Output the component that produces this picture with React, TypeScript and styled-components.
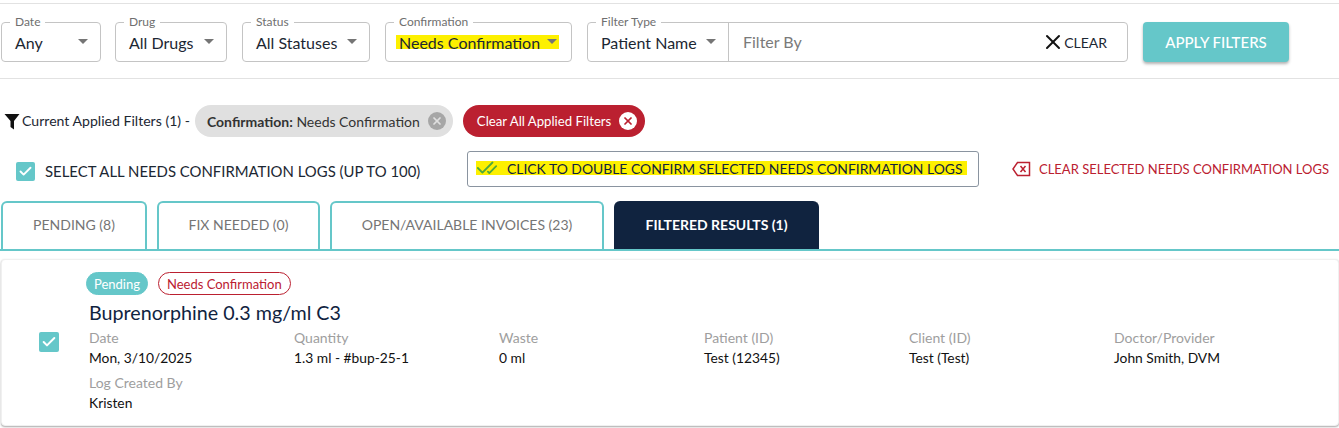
import React from "react";
import styled, { createGlobalStyle } from "styled-components";
import { X, Check, CheckCheck } from "lucide-react";

const GlobalStyle = createGlobalStyle`
  html, body {
    margin: 0;
    padding: 0;
    background: #fff;
    font-family: Lato, "Open Sans", sans-serif;
    color: #10233f;
  }
`;

const Page = styled.div`
  width: 1339px;
  height: 428px;
  overflow: hidden;
  padding-top: 3px;
  box-sizing: border-box;
`;

const FilterBar = styled.div`
  display: flex;
  align-items: flex-start;
  height: 76px;
  padding: 18px 0 0 1px;
  box-sizing: border-box;
  border-top: 1px solid #e2e2e2;
  border-bottom: 1px solid #e2e2e2;
`;

const Field = styled.div<{ $width: number; $gap?: number }>`
  position: relative;
  width: ${(p) => p.$width}px;
  height: 40px;
  margin-right: ${(p) => p.$gap ?? 15}px;
  box-sizing: border-box;
  border: 1px solid #c4c4c4;
  border-radius: 4px;
  display: flex;
  align-items: center;
  flex-shrink: 0;
`;

const Legend = styled.span`
  position: absolute;
  top: -8px;
  left: 8px;
  padding: 0 5px;
  background: #fff;
  font-size: 12px;
  line-height: 14px;
  color: #6f6f6f;
`;

const SelectValue = styled.div<{ $highlight?: boolean }>`
  display: flex;
  align-items: center;
  justify-content: space-between;
  flex: 1;
  height: 14px;
  margin: 0 12px 0 ${(p) => (p.$highlight ? 10 : 13)}px;
  padding: ${(p) => (p.$highlight ? "0 2px 0 3px" : "0")};
  background: ${(p) => (p.$highlight ? "#fdf000" : "transparent")};
  font-size: 16px;
  white-space: nowrap;
  color: #1c2733;
`;

const Caret = styled.span`
  width: 0;
  height: 0;
  margin-top: -2px;
  border-left: 5px solid transparent;
  border-right: 5px solid transparent;
  border-top: 5px solid #757575;
`;

const TypePart = styled.div`
  position: relative;
  display: flex;
  align-items: center;
  width: 140px;
  height: 100%;
  border-right: 1px solid #c4c4c4;
`;

const FilterInput = styled.div`
  flex: 1;
  padding: 0 0 2px 14px;
  font-size: 16px;
  color: #7a7a7a;
`;

const ClearButton = styled.div`
  display: flex;
  align-items: center;
  margin-right: 20px;
  font-size: 14px;
  color: #1c2733;
`;

const ClearIcon = styled(X)`
  margin-right: -1px;
`;

const ApplyButton = styled.div`
  width: 146px;
  height: 40px;
  border-radius: 4px;
  background: #65c7c9;
  color: #fff;
  font-size: 15px;
  font-weight: 500;
  display: flex;
  align-items: center;
  justify-content: center;
  box-shadow: 0 2px 3px rgba(0, 0, 0, 0.3);
`;

const AppliedRow = styled.div`
  display: flex;
  align-items: center;
  height: 32px;
  margin-top: 26px;
  padding-left: 4px;
  color: #1c2733;
`;

const AppliedLabel = styled.span`
  margin-left: 2px;
  margin-right: 5px;
  margin-bottom: 1px;
  font-size: 14.1px;
`;

const Chip = styled.div<{ $danger?: boolean }>`
  display: flex;
  align-items: center;
  justify-content: space-between;
  height: 32px;
  box-sizing: border-box;
  padding: 0 ${(p) => (p.$danger ? 8 : 7)}px 0 ${(p) => (p.$danger ? 14 : 12)}px;
  margin-right: ${(p) => (p.$danger ? 0 : 10)}px;
  border-radius: 16px;
  background: ${(p) => (p.$danger ? "#bb2030" : "#e0e0e0")};
  color: ${(p) => (p.$danger ? "#fff" : "#333")};
  font-size: ${(p) => (p.$danger ? 13.2 : 14)}px;
  white-space: nowrap;
  gap: 8px;
`;

const ChipClose = styled.span<{ $danger?: boolean }>`
  display: flex;
  align-items: center;
  justify-content: center;
  width: 18px;
  height: 18px;
  border-radius: 50%;
  background: ${(p) => (p.$danger ? "#fff" : "#a6a6a6")};
  color: ${(p) => (p.$danger ? "#bb2030" : "#e0e0e0")};
`;

const SelectionRow = styled.div`
  display: flex;
  align-items: center;
  height: 36px;
  margin-top: 14px;
  padding-left: 16px;
`;

const CheckBox = styled.span`
  display: flex;
  align-items: center;
  justify-content: center;
  flex-shrink: 0;
  width: 19px;
  height: 19px;
  border-radius: 2px;
  background: #65c7c9;
  color: #fff;
`;

const SelectAllCheck = styled(CheckBox)`
  margin-top: 4px;
`;

const SelectAllLabel = styled.span`
  flex-shrink: 0;
  width: 422px;
  margin-left: 10px;
  margin-top: 4px;
  font-size: 14.9px;
  white-space: nowrap;
  color: #1c2733;
`;

const ConfirmButton = styled.div`
  display: flex;
  align-items: center;
  flex-shrink: 0;
  width: 512px;
  height: 36px;
  box-sizing: border-box;
  padding: 0 0 2px 8px;
  border: 1px solid #8a94a0;
  border-radius: 3px;
  font-size: 13.9px;
`;

const Highlight = styled.span`
  display: flex;
  align-items: center;
  gap: 9px;
  height: 14px;
  padding-right: 4px;
  background: #fdf000;
  color: #10233f;
  white-space: nowrap;
`;

const ClearSelected = styled.div`
  display: flex;
  align-items: center;
  gap: 8px;
  margin-left: 33px;
  color: #bb2030;
  font-size: 13px;
  white-space: nowrap;
`;

const TabRow = styled.div`
  display: flex;
  align-items: flex-end;
  gap: 10px;
  height: 50px;
  margin-top: 14px;
  padding-left: 1px;
  box-sizing: border-box;
  border-bottom: 2px solid #65c7c9;
`;

const Tab = styled.div<{ $width: number; $active?: boolean }>`
  display: flex;
  align-items: center;
  justify-content: center;
  width: ${(p) => p.$width}px;
  height: 48px;
  padding-bottom: 3px;
  box-sizing: border-box;
  border: 2px solid ${(p) => (p.$active ? "#10233f" : "#65c7c9")};
  border-bottom: none;
  border-radius: 6px 6px 0 0;
  background: ${(p) => (p.$active ? "#10233f" : "#fff")};
  color: ${(p) => (p.$active ? "#fff" : "#757575")};
  font-size: 14px;
  font-weight: ${(p) => (p.$active ? 700 : 400)};
  white-space: nowrap;
`;

const Card = styled.div`
  display: flex;
  align-items: center;
  height: 167px;
  margin: 8px 0 0 1px;
  box-sizing: border-box;
  border: 1px solid #f0f0f0;
  border-radius: 4px;
  background: #fff;
  box-shadow: 0 1px 2px rgba(0, 0, 0, 0.35);
`;

const CardCheck = styled(CheckBox)`
  position: relative;
  top: -1px;
  width: 20px;
  height: 20px;
  margin: 0 30px 0 37px;
`;

const CardBody = styled.div`
  flex: 1;
  align-self: flex-start;
  padding-top: 12px;
`;

const Badges = styled.div`
  display: flex;
  gap: 10px;
  margin-left: -3px;
`;

const Badge = styled.span<{ $outline?: boolean }>`
  display: flex;
  align-items: center;
  height: 23px;
  box-sizing: border-box;
  padding: 0 ${(p) => (p.$outline ? 8 : 7)}px;
  border-radius: 12px;
  border: 1px solid ${(p) => (p.$outline ? "#bb2030" : "#65c7c9")};
  background: ${(p) => (p.$outline ? "#fff" : "#65c7c9")};
  color: ${(p) => (p.$outline ? "#bb2030" : "#fff")};
  font-size: 13px;
`;

const Title = styled.div`
  margin-top: 6px;
  font-size: 19.7px;
  line-height: 24px;
  color: #10233f;
`;

const Details = styled.div`
  display: grid;
  grid-template-columns: repeat(6, 205px);
  row-gap: 5px;
  margin-top: 3px;
`;

const Detail = styled.div`
  height: 40px;
`;

const DetailLabel = styled.div`
  font-size: 14px;
  line-height: 20px;
  color: #9e9e9e;
`;

const DetailValue = styled.div`
  font-size: 13.8px;
  line-height: 20px;
  color: #111;
`;

const details = [
  ["Date", "Mon, 3/10/2025"],
  ["Quantity", "1.3 ml - #bup-25-1"],
  ["Waste", "0 ml"],
  ["Patient (ID)", "Test (12345)"],
  ["Client (ID)", "Test (Test)"],
  ["Doctor/Provider", "John Smith, DVM"],
  ["Log Created By", "Kristen"],
];

const FunnelIcon = () => (
  <svg width="16" height="17" viewBox="0 0 16 17">
    <path d="M0.5 1h15L10 8v8.5L6.5 14V8z" fill="#111" />
  </svg>
);

const BackspaceIcon = () => (
  <svg width="19" height="16" viewBox="0 0 19 16" fill="none" stroke="#bb2030" strokeWidth="1.5">
    <path d="M5.5 1.5H17.5V14.5H5.5L1 8z" />
    <path d="M8.5 5l5 6M13.5 5l-5 6" />
  </svg>
);

const Select: React.FC<{ label: string; value: string; width: number; gap?: number; highlight?: boolean }> = ({
  label,
  value,
  width,
  gap,
  highlight,
}) => (
  <Field $width={width} $gap={gap}>
    <Legend>{label}</Legend>
    <SelectValue $highlight={highlight}>
      {value}
      <Caret />
    </SelectValue>
  </Field>
);

const App: React.FC = () => {
  return (
    <Page>
      <GlobalStyle />
      <FilterBar>
        <Select label="Date" value="Any" width={100} gap={14} />
        <Select label="Drug" value="All Drugs" width={112} />
        <Select label="Status" value="All Statuses" width={128} />
        <Select label="Confirmation" value="Needs Confirmation" width={187} highlight />
        <Field $width={541}>
          <TypePart>
            <Legend>Filter Type</Legend>
            <SelectValue>
              Patient Name
              <Caret />
            </SelectValue>
          </TypePart>
          <FilterInput>Filter By</FilterInput>
          <ClearButton>
            <ClearIcon size={24} strokeWidth={2} color="#111" />
            CLEAR
          </ClearButton>
        </Field>
        <ApplyButton>APPLY FILTERS</ApplyButton>
      </FilterBar>

      <AppliedRow>
        <FunnelIcon />
        <AppliedLabel>Current Applied Filters (1) -</AppliedLabel>
        <Chip>
          <span>
            <b>Confirmation:</b> Needs Confirmation
          </span>
          <ChipClose>
            <X size={12} strokeWidth={3.5} />
          </ChipClose>
        </Chip>
        <Chip $danger>
          Clear All Applied Filters
          <ChipClose $danger>
            <X size={12} strokeWidth={3.5} />
          </ChipClose>
        </Chip>
      </AppliedRow>

      <SelectionRow>
        <SelectAllCheck>
          <Check size={15} strokeWidth={3} />
        </SelectAllCheck>
        <SelectAllLabel>SELECT ALL NEEDS CONFIRMATION LOGS (UP TO 100)</SelectAllLabel>
        <ConfirmButton>
          <Highlight>
            <CheckCheck size={22} strokeWidth={2} color="#4fa83d" />
            CLICK TO DOUBLE CONFIRM SELECTED NEEDS CONFIRMATION LOGS
          </Highlight>
        </ConfirmButton>
        <ClearSelected>
          <BackspaceIcon />
          CLEAR SELECTED NEEDS CONFIRMATION LOGS
        </ClearSelected>
      </SelectionRow>

      <TabRow>
        <Tab $width={146}>PENDING (8)</Tab>
        <Tab $width={163}>FIX NEEDED (0)</Tab>
        <Tab $width={274}>OPEN/AVAILABLE INVOICES (23)</Tab>
        <Tab $width={205} $active>
          FILTERED RESULTS (1)
        </Tab>
      </TabRow>

      <Card>
        <CardCheck>
          <Check size={16} strokeWidth={3} />
        </CardCheck>
        <CardBody>
          <Badges>
            <Badge>Pending</Badge>
            <Badge $outline>Needs Confirmation</Badge>
          </Badges>
          <Title>Buprenorphine 0.3 mg/ml C3</Title>
          <Details>
            {details.map(([label, value]) => (
              <Detail key={label}>
                <DetailLabel>{label}</DetailLabel>
                <DetailValue>{value}</DetailValue>
              </Detail>
            ))}
          </Details>
        </CardBody>
      </Card>
    </Page>
  );
};

export default App;
